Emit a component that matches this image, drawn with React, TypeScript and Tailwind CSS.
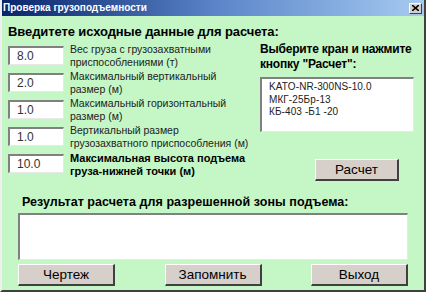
import React, { useState } from 'react';

const rows = [
    { value: '8.0', lines: ['Вес груза с грузозахватными', 'приспособлениями (т)'], bold: false },
    { value: '2.0', lines: ['Максимальный вертикальный', 'размер (м)'], bold: false },
    { value: '1.0', lines: ['Максимальный горизонтальный', 'размер (м)'], bold: false },
    { value: '1.0', lines: ['Вертикальный размер', 'грузозахватного приспособления (м)'], bold: false },
    { value: '10.0', lines: ['Максимальная высота подъема', 'груза-нижней точки (м)'], bold: true },
];

const cranes = ['KATO-NR-300NS-10.0', 'МКГ-25Бр-13', 'КБ-403 -Б1 -20'];

const sunken = 'border-t-2 border-l-2 border-b border-r border-t-[#808080] border-l-[#808080] border-b-[#e8e8e8] border-r-[#e8e8e8] bg-white';
const raised = 'border-t border-l border-b-2 border-r-2 border-t-white border-l-white border-b-[#404040] border-r-[#404040] bg-[#d6cfca] text-black text-[13.5px]';

const App: React.FC = () => {
    const [values, setValues] = useState(rows.map(r => r.value));

    return (
        <div className="w-[426px] h-[292px] overflow-hidden flex flex-col bg-[#c5f6c5] border-l-2 border-l-[#f0f0f0] border-r-2 border-r-[#404040] border-b-2 border-b-[#404040] font-['Liberation_Sans',Arial,sans-serif]">
            {/* Title bar */}
            <div className="h-[16px] shrink-0 flex items-center justify-between bg-gradient-to-r from-[#0a246a] via-[#5a84c8] to-[#a6caf0] pl-[1px] pr-[2px]">
                <span className="text-white text-[10px] font-bold leading-none">
                    Проверка грузоподъемности
                </span>
                <button className="w-[13px] h-[11px] bg-[#d4d0c8] border-t border-l border-b border-r border-t-white border-l-white border-b-[#404040] border-r-[#404040] flex items-center justify-center">
                    <svg width="7" height="6" viewBox="0 0 7 6">
                        <path d="M0 0 L7 6 M7 0 L0 6" stroke="black" strokeWidth="1.6" />
                    </svg>
                </button>
            </div>

            {/* Body */}
            <div className="flex flex-col pl-[6px] pr-[14px] pt-[8px]">
                <h1 className="text-[13px] font-bold leading-[16px] tracking-[-0.1px] text-black whitespace-nowrap">Введитете исходные данные для расчета:</h1>

                <div className="flex mt-[6px]">
                    {/* Inputs */}
                    <div className="flex flex-col gap-[8px] w-[250px] shrink-0">
                        {rows.map((row, i) => (
                            <div key={i} className="flex items-start h-[19px]">
                                <input
                                    value={values[i]}
                                    onChange={(e) => {
                                        const next = [...values];
                                        next[i] = e.target.value;
                                        setValues(next);
                                    }}
                                    className={`w-[56px] h-[19px] shrink-0 px-[7px] text-[12px] text-[#333] outline-none ${sunken}`}
                                />
                                {row.bold ? (
                                    <div className="ml-[6px] -mt-[2px] text-[11px] leading-[12.5px] font-bold text-black whitespace-nowrap">
                                        {row.lines.map((l, j) => (
                                            <div key={j}>{l}</div>
                                        ))}
                                    </div>
                                ) : (
                                    <div className="ml-[6px] -mt-[3px] text-[10.5px] leading-[12.5px] text-[#222] whitespace-nowrap">
                                        {row.lines.map((l, j) => (
                                            <div key={j}>{l}</div>
                                        ))}
                                    </div>
                                )}
                            </div>
                        ))}
                    </div>

                    {/* Crane list */}
                    <div className="flex flex-col shrink-0 ml-[2px] -mt-[4px]">
                        <p className="text-[12px] font-bold leading-[15px] tracking-[-0.2px] text-black whitespace-nowrap">
                            Выберите кран и нажмите<br />кнопку "Расчет":
                        </p>
                        <div className={`mt-[5px] w-[154px] h-[55px] pl-[7px] pt-[2px] ${sunken}`}>
                            {cranes.map((c) => (
                                <div key={c} className="text-[10px] leading-[12.5px] tracking-[0.1px] text-[#222]">{c}</div>
                            ))}
                        </div>
                        <button className={`mt-[27px] ml-[55px] w-[84px] h-[22px] ${raised}`}>Расчет</button>
                    </div>
                </div>

                {/* Result */}
                <p className="mt-[14px] ml-[14px] text-[12.5px] font-bold leading-[14px] tracking-[0.05px] text-black whitespace-nowrap">
                    Результат расчета для разрешенной зоны подъема:
                </p>
                <div className={`mt-[4px] ml-[10px] w-[390px] h-[47px] ${sunken}`} />

                <div className="flex justify-between ml-[10px] w-[390px] mt-[4px]">
                    <button className={`w-[97px] h-[22px] ${raised}`}>Чертеж</button>
                    <button className={`w-[97px] h-[22px] ${raised}`}>Запомнить</button>
                    <button className={`w-[97px] h-[22px] ${raised}`}>Выход</button>
                </div>
            </div>
        </div>
    );
};

export default App;
